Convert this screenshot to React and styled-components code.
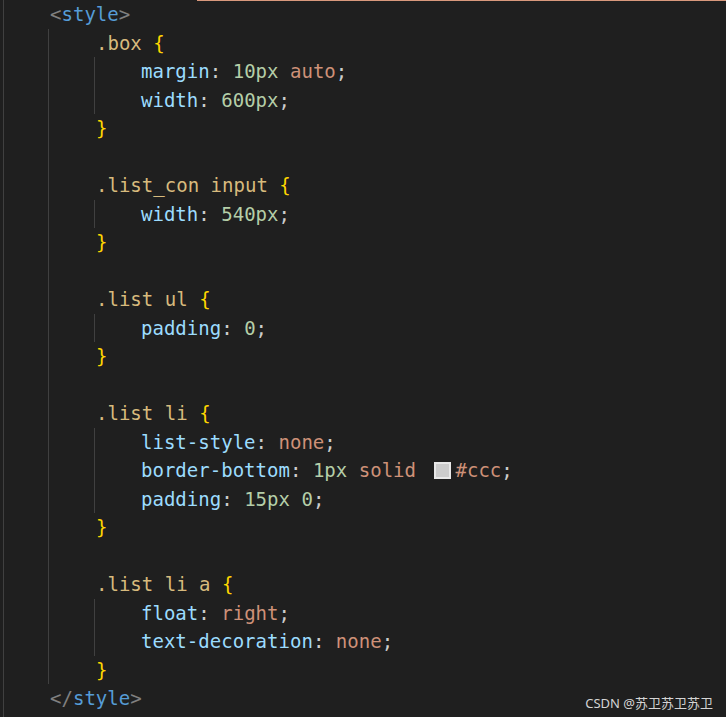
import React from "react";
import styled, { createGlobalStyle } from "styled-components";

const GlobalStyle = createGlobalStyle`
  html, body {
    margin: 0;
    padding: 0;
    background: #1f1f1f;
  }
`;

const colors = {
  tag: "#569cd6",
  angle: "#808080",
  selector: "#d7ba7d",
  brace: "#ffd700",
  prop: "#9cdcfe",
  num: "#b5cea8",
  str: "#ce9178",
  punc: "#cccccc"
};

const Editor = styled.div`
  position: relative;
  box-sizing: border-box;
  height: 100vh;
  padding-left: 3px;
  background: #1f1f1f;
  font-family: "DejaVu Sans Mono", "Liberation Mono", monospace;
  font-size: 19.05px;
  color: #cccccc;
  overflow: hidden;
`;

const TopMark = styled.div`
  position: absolute;
  top: 0;
  left: 197px;
  right: 0;
  height: 1px;
  background: #d9987c;
`;

const Guide = styled.div`
  display: flex;
  flex-direction: column;
  border-left: 1px solid #404040;
  margin-left: ${(p) => p.offset || 0}px;
`;

const Root = styled(Guide)`
  height: 100%;
`;

const Line = styled.div`
  height: 28.5px;
  line-height: 28.5px;
  padding-left: ${(p) => p.indent}px;
  white-space: pre;
`;

const Tok = styled.span`
  color: ${(p) => colors[p.kind]};
`;

const Swatch = styled.span`
  display: inline-block;
  box-sizing: border-box;
  width: 17px;
  height: 17px;
  margin: 0 4px 0 7px;
  vertical-align: -2px;
  background: #cccccc;
  border: 2px solid #e8e8e8;
`;

const Watermark = styled.div`
  position: absolute;
  right: 13px;
  bottom: 5px;
  font-family: "Noto Sans", "Noto Sans CJK SC", sans-serif;
  font-size: 13px;
  color: #d4d4d4;
`;

const rules = [
  {
    sel: ".box",
    props: [
      ["margin", [["num", "10px"], ["punc", " "], ["str", "auto"]]],
      ["width", [["num", "600px"]]]
    ]
  },
  {
    sel: ".list_con input",
    props: [["width", [["num", "540px"]]]]
  },
  {
    sel: ".list ul",
    props: [["padding", [["num", "0"]]]]
  },
  {
    sel: ".list li",
    props: [
      ["list-style", [["str", "none"]]],
      ["border-bottom", [["num", "1px"], ["punc", " "], ["str", "solid"], ["punc", " "], ["swatch"], ["str", "#ccc"]]],
      ["padding", [["num", "15px"], ["punc", " "], ["num", "0"]]]
    ]
  },
  {
    sel: ".list li a",
    props: [
      ["float", [["str", "right"]]],
      ["text-decoration", [["str", "none"]]]
    ]
  }
];

function Rule({ rule, last }) {
  return (
    <>
      <Line indent={47}>
        <Tok kind="selector">{rule.sel}</Tok> <Tok kind="brace">{"{"}</Tok>
      </Line>
      <Guide offset={45}>
        {rule.props.map(([name, value]) => (
          <Line indent={46} key={name}>
            <Tok kind="prop">{name}</Tok>
            <Tok kind="punc">: </Tok>
            {value.map((v, i) =>
              v[0] === "swatch" ? (
                <Swatch key={i} />
              ) : (
                <Tok kind={v[0]} key={i}>
                  {v[1]}
                </Tok>
              )
            )}
            <Tok kind="punc">;</Tok>
          </Line>
        ))}
      </Guide>
      <Line indent={47}>
        <Tok kind="brace">{"}"}</Tok>
      </Line>
      {!last && <Line indent={47} />}
    </>
  );
}

export default function App() {
  return (
    <Editor>
      <GlobalStyle />
      <Root>
        <Line indent={46}>
          <Tok kind="angle">&lt;</Tok>
          <Tok kind="tag">style</Tok>
          <Tok kind="angle">&gt;</Tok>
        </Line>
        <Guide offset={44}>
          {rules.map((r, i) => (
            <Rule rule={r} key={r.sel} last={i === rules.length - 1} />
          ))}
        </Guide>
        <Line indent={46}>
          <Tok kind="angle">&lt;/</Tok>
          <Tok kind="tag">style</Tok>
          <Tok kind="angle">&gt;</Tok>
        </Line>
      </Root>
      <TopMark />
      <Watermark>CSDN @苏卫苏卫苏卫</Watermark>
    </Editor>
  );
}
